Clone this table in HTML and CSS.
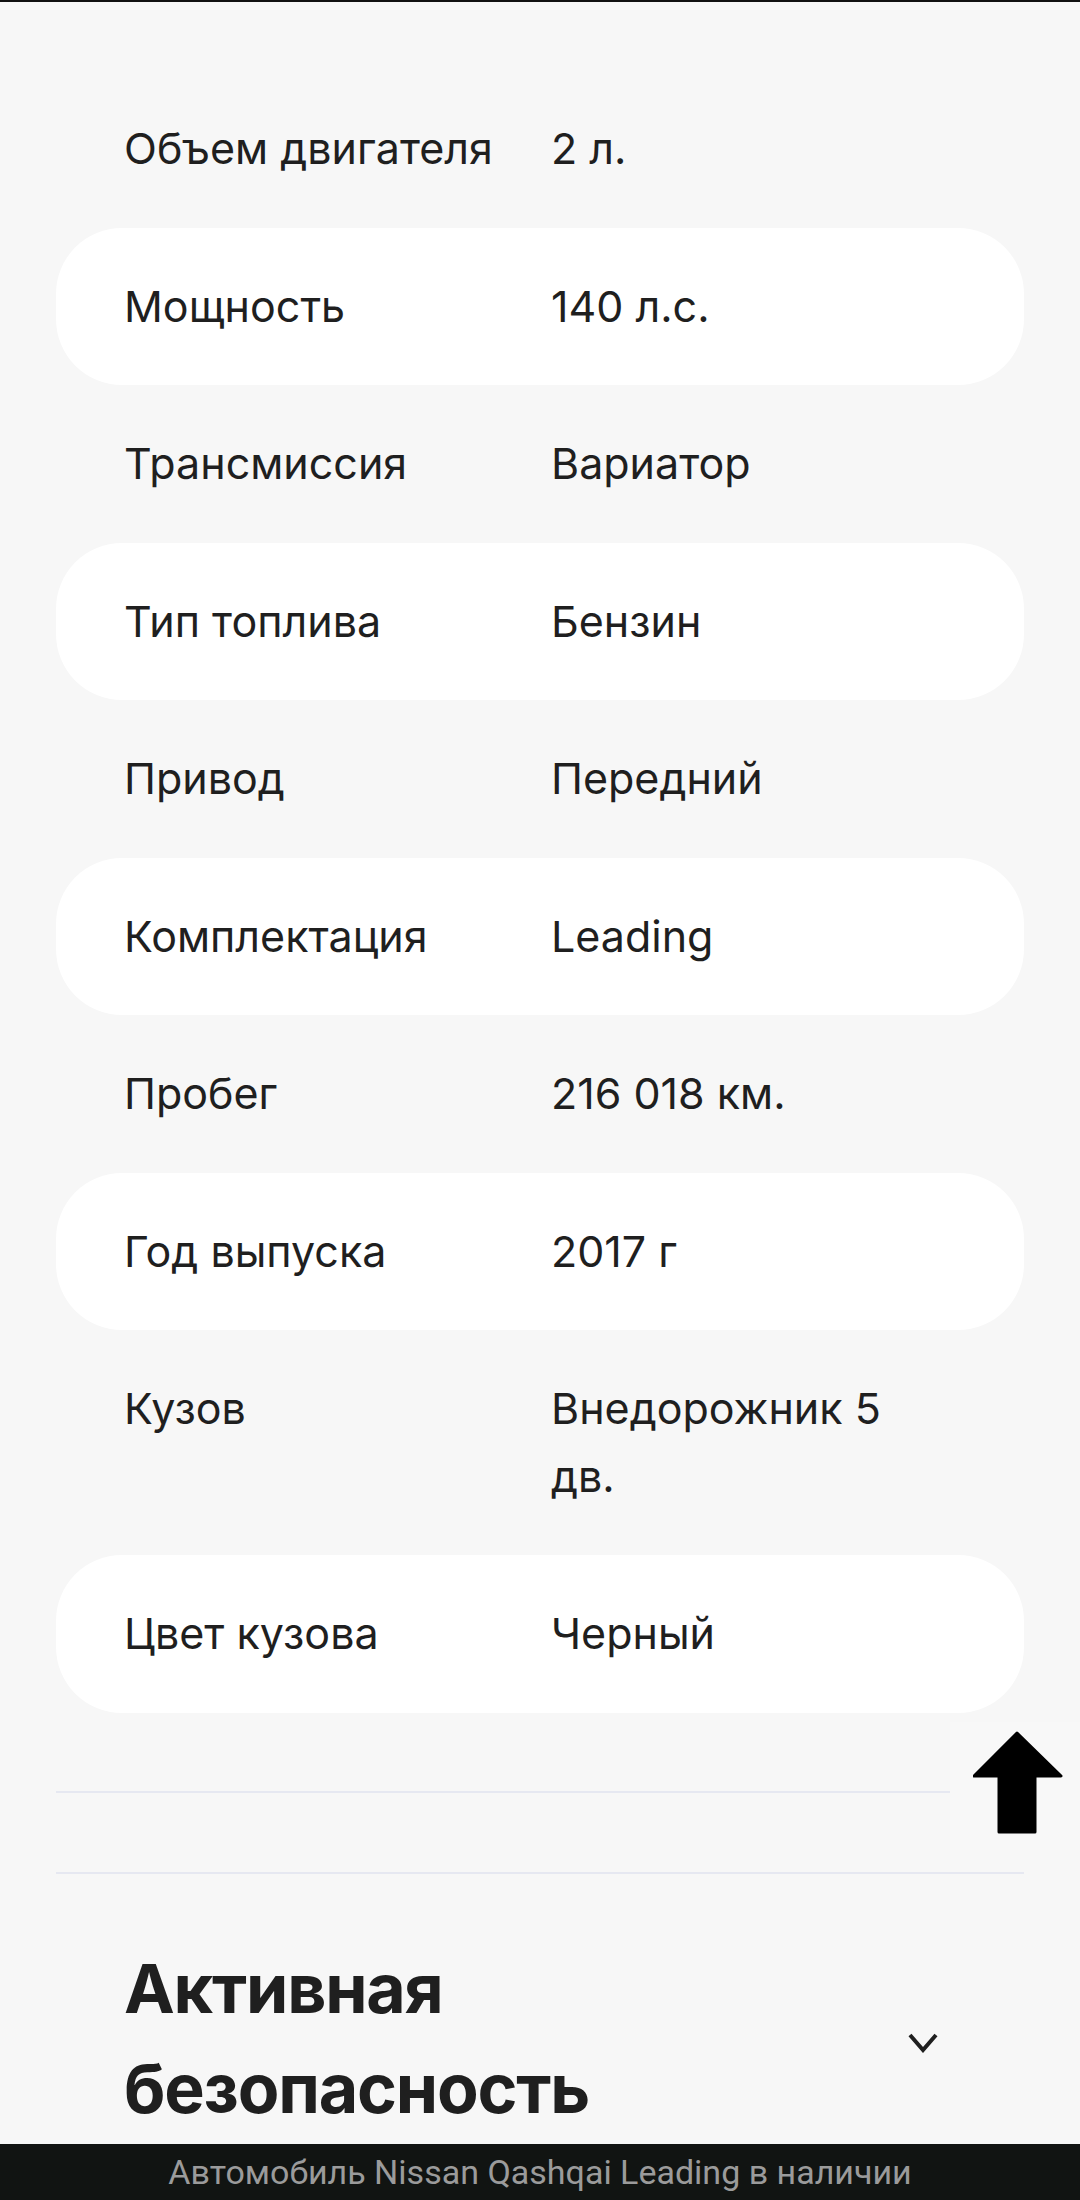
FILE: index.html
```html
<!DOCTYPE html>
<html lang="ru">
<head>
    <meta charset="UTF-8">
    <title>Nissan Qashqai Leading</title>
    <link rel="stylesheet" href="styles.css">
</head>
<body>

<div class="page">
    <div class="specs">
        <div class="spec_row">
            <span class="spec_name">Объем двигателя</span>
            <span class="spec_value">2 л.</span>
        </div>
        <div class="spec_row filled">
            <span class="spec_name">Мощность</span>
            <span class="spec_value">140 л.с.</span>
        </div>
        <div class="spec_row">
            <span class="spec_name">Трансмиссия</span>
            <span class="spec_value">Вариатор</span>
        </div>
        <div class="spec_row filled">
            <span class="spec_name">Тип топлива</span>
            <span class="spec_value">Бензин</span>
        </div>
        <div class="spec_row">
            <span class="spec_name">Привод</span>
            <span class="spec_value">Передний</span>
        </div>
        <div class="spec_row filled">
            <span class="spec_name">Комплектация</span>
            <span class="spec_value">Leading</span>
        </div>
        <div class="spec_row">
            <span class="spec_name">Пробег</span>
            <span class="spec_value">216 018 км.</span>
        </div>
        <div class="spec_row filled">
            <span class="spec_name">Год выпуска</span>
            <span class="spec_value">2017 г</span>
        </div>
        <div class="spec_row">
            <span class="spec_name">Кузов</span>
            <span class="spec_value">Внедорожник 5 дв.</span>
        </div>
        <div class="spec_row filled">
            <span class="spec_name">Цвет кузова</span>
            <span class="spec_value">Черный</span>
        </div>
    </div>

    <hr class="divider first">
    <hr class="divider">

    <div class="accordion">
        <h2 class="accordion_title">Активная безопасность</h2>
        <svg class="chevron" width="30" height="20" viewBox="0 0 30 20">
            <path d="M2 2 L15 17 L28 2" fill="none" stroke="#1f1f1f" stroke-width="4"/>
        </svg>
    </div>
</div>

<!-- floating scroll-to-top button -->
<div class="up_button">
    <svg width="90" height="104" viewBox="0 0 90 104">
        <path d="M44 2 L88 45 L62 45 L62 101 L26 101 L26 45 L1 45 Z" fill="#000" stroke="#000" stroke-width="3" stroke-linejoin="round"/>
    </svg>
</div>

<div class="bottom_bar">Автомобиль Nissan Qashqai Leading в наличии</div>

</body>
</html>
```

FILE: styles.css
```css
html, body {
    margin: 0;
    padding: 0;
}

body {
    background-color: #f7f7f7;
    font-family: Inter, "Noto Sans", sans-serif;
    color: #1f1f1f;
    border-top: 2px solid #111;
}

.page {
    padding: 68px 56px 120px 56px;
}

.spec_row {
    display: grid;
    grid-template-columns: 427px 1fr;
    padding: 45px 80px 45px 68px;
    font-size: 43px;
    line-height: 67.5px;
    border-radius: 66px;
}

.spec_row.filled {
    background-color: #fff;
}

.divider {
    border: none;
    height: 2px;
    background-color: #e6e8f1;
    margin: 0;
}

.divider.first {
    margin-top: 78px;
    margin-bottom: 79px;
}

.accordion {
    display: flex;
    align-items: center;
    justify-content: space-between;
    padding: 64px 86px 0 68px;
}

.accordion_title {
    margin: 0;
    font-size: 68px;
    line-height: 100px;
    font-weight: 700;
    letter-spacing: -1.2px;
    width: 480px;
}

.chevron {
    display: block;
    margin-top: 10px;
}

.up_button {
    position: fixed;
    right: 0;
    top: 1722px;
    width: 130px;
    height: 128px;
    background-color: #f8f8f8;
    padding: 9px 0 0 23px;
    box-sizing: border-box;
}

.up_button svg {
    display: block;
}

.bottom_bar {
    position: fixed;
    left: 0;
    right: 0;
    bottom: 0;
    height: 56px;
    background-color: #111412;
    color: #9b9b9b;
    font-family: Roboto, "Liberation Sans", sans-serif;
    font-size: 34px;
    line-height: 56px;
    text-align: center;
    white-space: nowrap;
}
```
